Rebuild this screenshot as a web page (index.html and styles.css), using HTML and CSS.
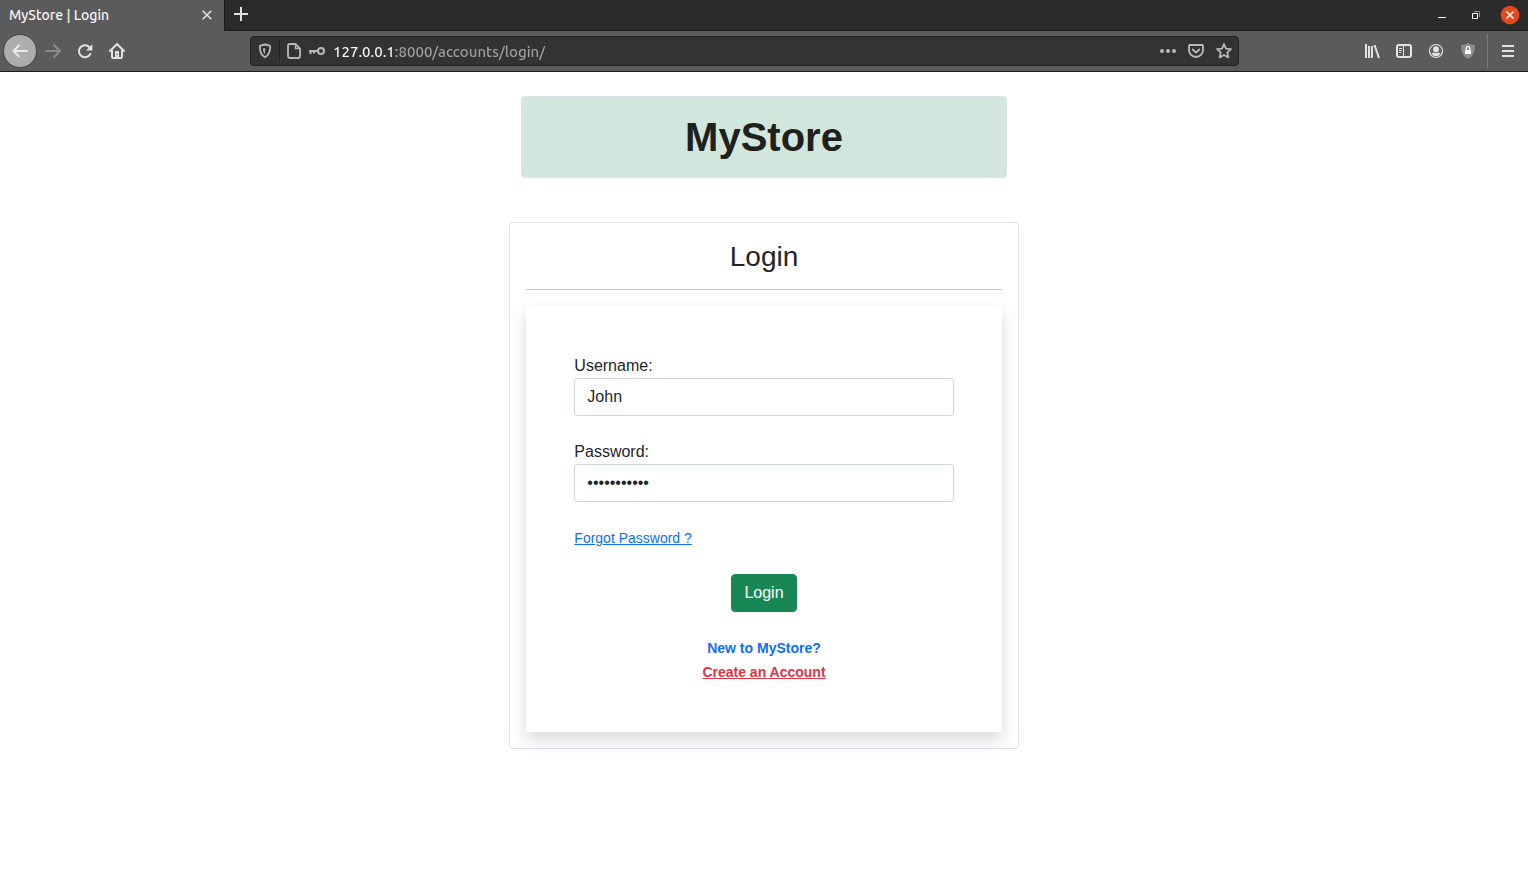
FILE: index.html
```html
<!DOCTYPE html>
<html lang="en">
<head>
<meta charset="utf-8">
<title>MyStore | Login</title>
<link rel="stylesheet" href="styles.css">
</head>
<body>
<header class="browser">
  <div class="tab-strip">
    <div class="tab">
      <span class="tab-title">MyStore | Login</span>
      <button class="icon-btn tab-close" type="button" aria-label="Close tab">
        <svg width="16" height="16" viewBox="0 0 16 16"><path d="M3.7 3.7l8.6 8.6M12.3 3.7l-8.6 8.6" stroke-width="1.6"/></svg>
      </button>
    </div>
    <button class="icon-btn new-tab" type="button" aria-label="New tab">
      <svg width="16" height="16" viewBox="0 0 16 16"><path d="M8 1v14M1 8h14" stroke-width="2"/></svg>
    </button>
    <div class="window-controls">
      <button class="icon-btn" type="button" aria-label="Minimize">
        <svg width="20" height="20" viewBox="0 0 20 20"><path d="M6 12.5h8" stroke="#fff" stroke-width="1"/></svg>
      </button>
      <button class="icon-btn" type="button" aria-label="Restore">
        <svg width="20" height="20" viewBox="0 0 20 20"><path d="M6.5 8.500h5v5h-5z" stroke="#fff" stroke-width="1"/><path d="M8 6.500h5.500v5.500" stroke="#8f8f8f" stroke-width="1"/></svg>
      </button>
      <button class="icon-btn" type="button" aria-label="Close window">
        <svg width="20" height="20" viewBox="0 0 20 20"><circle cx="10" cy="10" r="9.300" fill="#e64a19" stroke="none"/><path d="M6.500 6.500l7 7M13.500 6.500l-7 7" stroke="#fff" stroke-width="1.500"/></svg>
      </button>
    </div>
  </div>
  <div class="toolbar">
    <div class="nav-buttons">
      <button class="icon-btn back" type="button" aria-label="Back">
        <svg width="18" height="18" viewBox="0 0 18 18"><path d="M16 9H2.500M8 3.500L2.500 9l5.500 5.500" stroke="#ececec" stroke-width="1.900" stroke-linecap="round" stroke-linejoin="round"/></svg>
      </button>
      <button class="icon-btn tool" type="button" aria-label="Forward" disabled>
        <svg width="18" height="18" viewBox="0 0 18 18"><path d="M2 9h14M10 3l6 6-6 6" stroke="#8c8c8c" stroke-width="1.900" stroke-linecap="round" stroke-linejoin="round"/></svg>
      </button>
      <button class="icon-btn tool" type="button" aria-label="Reload">
        <svg width="16" height="16" viewBox="0 0 16 16"><path d="M12.500 4.300A6 6 0 1 0 13.300 11" stroke-width="2" stroke-linecap="round"/><path d="M15.300 1.200v6.300H9z" fill="#e2e2e2" stroke="none"/></svg>
      </button>
      <button class="icon-btn tool" type="button" aria-label="Home">
        <svg width="16" height="16" viewBox="0 0 16 16"><path d="M1 8l7-7 7 7M3 7.500V14q0 1 1 1h8q1 0 1-1V7.500" stroke-width="2" stroke-linecap="round" stroke-linejoin="round"/><path d="M6 14V9q0-1 1-1h2q1 0 1 1v5z" fill="#e2e2e2" stroke="none"/><path d="M8 10.500v1.500" stroke="#5b5b5b" stroke-width="1"/></svg>
      </button>
    </div>
    <div class="address-bar">
      <button class="icon-btn shield" type="button" aria-label="Tracking protection">
        <svg width="14" height="16" viewBox="0 0 14 16"><path d="M7 1.500c2 .2 3.800.8 5.200 1.500 0 5.500-.8 9-5.200 11.300C2.600 12 1.800 8.500 1.800 3 3.200 2.300 5 1.700 7 1.500z" stroke-width="1.800" stroke-linejoin="round"/><path d="M7 5v6C5.500 10 5 8 5 5.500z" fill="#b9b9b9" stroke="none"/></svg>
      </button>
      <button class="icon-btn site-info" type="button" aria-label="Site information">
        <svg width="14" height="16" viewBox="0 0 14 16"><path d="M3 1h5.500L13 5.500V13q0 2-2 2H3q-2 0-2-2V3q0-2 2-2z" stroke-width="1.800"/><path d="M8.500 1v4.500H13" stroke-width="1.500"/></svg>
      </button>
      <button class="icon-btn key" type="button" aria-label="Saved login">
        <svg width="16" height="16" viewBox="0 0 16 16"><circle cx="12" cy="8" r="3" stroke-width="2"/><path d="M9 8H0M1.500 8v3M5 8v2.500" stroke-width="2"/></svg>
      </button>
      <input class="address" type="text" value="127.0.0.1:8000/accounts/login/" aria-label="Address">
      <div class="page-actions">
        <button class="icon-btn" type="button" aria-label="Page actions">
          <svg width="16" height="16" viewBox="0 0 16 16"><g fill="#b9b9b9" stroke="none"><circle cx="2" cy="8" r="2"/><circle cx="8" cy="8" r="2"/><circle cx="14" cy="8" r="2"/></g></svg>
        </button>
        <button class="icon-btn" type="button" aria-label="Save to Pocket">
          <svg width="16" height="16" viewBox="0 0 16 16"><path d="M2 2h12q1 0 1 1v4a7 7 0 0 1-14 0V3q0-1 1-1z" stroke-width="1.800"/><path d="M4.700 6.500L8 9.700l3.300-3.200" stroke-width="1.800" stroke-linecap="round" stroke-linejoin="round"/></svg>
        </button>
        <button class="icon-btn" type="button" aria-label="Bookmark this page">
          <svg width="16" height="16" viewBox="0 0 16 16"><path d="M8 1l2 4.600 5 .5-3.700 3.400 1 5L8 12l-4.300 2.500 1-5L1 6.100l5-.5z" stroke-width="1.700" stroke-linejoin="round"/></svg>
        </button>
      </div>
    </div>
    <div class="tools">
      <button class="icon-btn tool" type="button" aria-label="Library">
        <svg width="16" height="16" viewBox="0 0 16 16"><path d="M2 1v14M5 3v12M8 3v12M10.500 2l4.500 13" stroke-width="2"/></svg>
      </button>
      <button class="icon-btn tool" type="button" aria-label="Sidebars">
        <svg width="16" height="16" viewBox="0 0 16 16"><rect x="1" y="2" width="14" height="12" rx="2" stroke-width="2"/><path d="M7.500 2v12M3 5.500h3M3 7.500h3M3 9.500h2" stroke-width="1"/></svg>
      </button>
      <button class="icon-btn tool" type="button" aria-label="Account">
        <svg width="16" height="16" viewBox="0 0 16 16"><circle cx="8" cy="8" r="6.500" stroke-width="1.200"/><circle cx="8" cy="6.200" r="3" fill="#e2e2e2" stroke="none"/><path d="M3.500 10.500Q5 9.500 6 9.500q2 1 4 0 1 0 2.500 1-1.500 2.800-4.500 2.800t-4.500-2.800z" fill="#e2e2e2" stroke="none"/></svg>
      </button>
      <button class="icon-btn tool" type="button" aria-label="Privacy extension">
        <svg width="16" height="16" viewBox="0 0 16 16"><path d="M8 0q3 2 7 2.200Q15.500 12 8 16 .5 12 1 2.200 5 2 8 0z" fill="#8d8d8d" stroke="none"/><rect x="5" y="7" width="6" height="4" fill="#fff" stroke="none"/><path d="M6.200 7V5.500a1.800 1.800 0 0 1 3.600 0V7" stroke="#fff" stroke-width="1.200"/></svg>
      </button>
      <button class="icon-btn menu" type="button" aria-label="Menu">
        <svg width="16" height="16" viewBox="0 0 16 16"><path d="M2 3h12M2 8h12M2 13h12" stroke-width="2"/></svg>
      </button>
    </div>
  </div>
</header>
<main class="page">
  <div class="column">
    <div class="banner"><h1 class="brand">MyStore</h1></div>
    <section class="card">
      <h3 class="card-title">Login</h3>
      <hr class="rule">
      <form class="login-form">
        <div class="field">
          <label for="username">Username:</label>
          <input class="control" id="username" type="text" value="John">
        </div>
        <div class="field">
          <label for="password">Password:</label>
          <input class="control" id="password" type="password" value="johnstore12">
        </div>
        <a class="forgot" href="#">Forgot Password ?</a>
        <button class="submit" type="submit">Login</button>
        <div class="signup">
          <span class="signup-text">New to MyStore?</span>
          <a class="signup-link" href="#">Create an Account</a>
        </div>
      </form>
    </section>
  </div>
</main>
</body>
</html>
```

FILE: styles.css
```css
*, *::before, *::after { box-sizing: border-box; }

body {
  margin: 0;
  background: #fff;
  color: #212529;
  font: 16px/24px "Liberation Sans", Arial, sans-serif;
}

/* Browser frame */
.browser {
  font-family: Ubuntu, "Noto Sans", sans-serif;
  color: #f5f5f5;
}

.icon-btn {
  display: flex;
  align-items: center;
  justify-content: center;
  flex: none;
  padding: 0;
  border: 0;
  background: none;
}

.icon-btn svg { fill: none; stroke: #e2e2e2; }

.tab-strip {
  display: flex;
  height: 31px;
  background: #2b2b2b;
}

.tab {
  display: flex;
  align-items: center;
  justify-content: space-between;
  width: 224px;
  padding: 0 9px 2px;
  background: #5b5b5b;
}

.tab-title { font-size: 14px; font-weight: 500; }

.new-tab {
  width: 32px;
  padding-bottom: 3px;
  border-left: 1px solid #1c1c1c;
  border-bottom: 1px solid #1c1c1c;
}

.window-controls {
  display: flex;
  flex: 1;
  align-items: center;
  justify-content: flex-end;
  gap: 14px;
  padding-right: 8px;
  border-bottom: 1px solid #1c1c1c;
}

.toolbar {
  display: flex;
  align-items: center;
  height: 41px;
  padding-left: 3px;
  background: #5b5b5b;
  border-bottom: 1px solid #1c1c1c;
}

.nav-buttons, .tools { display: flex; align-items: center; }

.back {
  width: 34px;
  height: 34px;
  border: 1px solid #444;
  border-radius: 50%;
  background: #adadad;
}

.tool { width: 32px; height: 32px; }

.address-bar {
  display: flex;
  flex: 1;
  align-items: center;
  height: 30px;
  margin: 0 117px;
  border: 1px solid #1f1f1f;
  border-radius: 4px;
  background: #333;
}

.address-bar .icon-btn svg { stroke: #b9b9b9; }

.shield { width: 29px; height: 22px; border-right: 1px solid #222; }
.site-info { width: 28px; }
.key { width: 18px; }

/* The host part of the address is brighter than the path. */
.address {
  flex: 1;
  min-width: 0;
  padding: 2px 0 0 7px;
  border: 0;
  background: linear-gradient(90deg, #f9f9fa 70px, #a1a1a1 70px);
  background-clip: text;
  -webkit-text-fill-color: transparent;
  font: 500 15px/24px Ubuntu, "Noto Sans", sans-serif;
}

.page-actions { display: flex; gap: 12px; padding-right: 6px; }

.menu {
  width: 41px;
  height: 34px;
  margin-left: 3px;
  border-left: 1px solid #7c7c7c;
}

/* Login page */
.page {
  display: flex;
  justify-content: center;
  padding: 24px 0;
}

.column {
  display: flex;
  flex-direction: column;
  gap: 44px;
  width: 33.3333%;
  min-width: 320px;
}

.banner {
  margin: 0 12px;
  padding: 16px;
  border: 1px solid #dee2e6;
  border-radius: 4px;
  background: #d1e7dd;
  text-align: center;
}

.brand {
  margin: 0;
  color: #20201c;
  font-size: 40px;
  line-height: 48px;
}

.card {
  padding: 16px;
  border: 1px solid #dee2e6;
  border-radius: 4px;
}

.card-title {
  margin: 0;
  font-size: 28px;
  font-weight: 400;
  line-height: 36px;
  text-align: center;
}

.rule {
  height: 1px;
  margin: 14px 0 16px;
  border: 0;
  background: #c7c8c9;
}

.login-form {
  display: flex;
  flex-direction: column;
  align-items: center;
  gap: 24px;
  padding: 48px;
  background: #fff;
  box-shadow: 0 8px 16px rgba(0, 0, 0, 0.15);
}

.field { display: flex; flex-direction: column; width: 100%; }

.control {
  width: 100%;
  padding: 6px 12px;
  border: 1px solid #ced4da;
  border-radius: 4px;
  background: #fff;
  color: #212529;
  font: inherit;
}

.forgot {
  align-self: flex-start;
  color: #0d6efd;
  font-size: 14px;
}

.submit {
  padding: 6px 12px;
  border: 1px solid #198754;
  border-radius: 4px;
  background: #198754;
  color: #fff;
  font: inherit;
}

.signup {
  display: flex;
  flex-direction: column;
  align-items: center;
  font-size: 14px;
  font-weight: 700;
}

.signup-text { color: #0d6efd; }
.signup-link { color: #dc3545; }
```
